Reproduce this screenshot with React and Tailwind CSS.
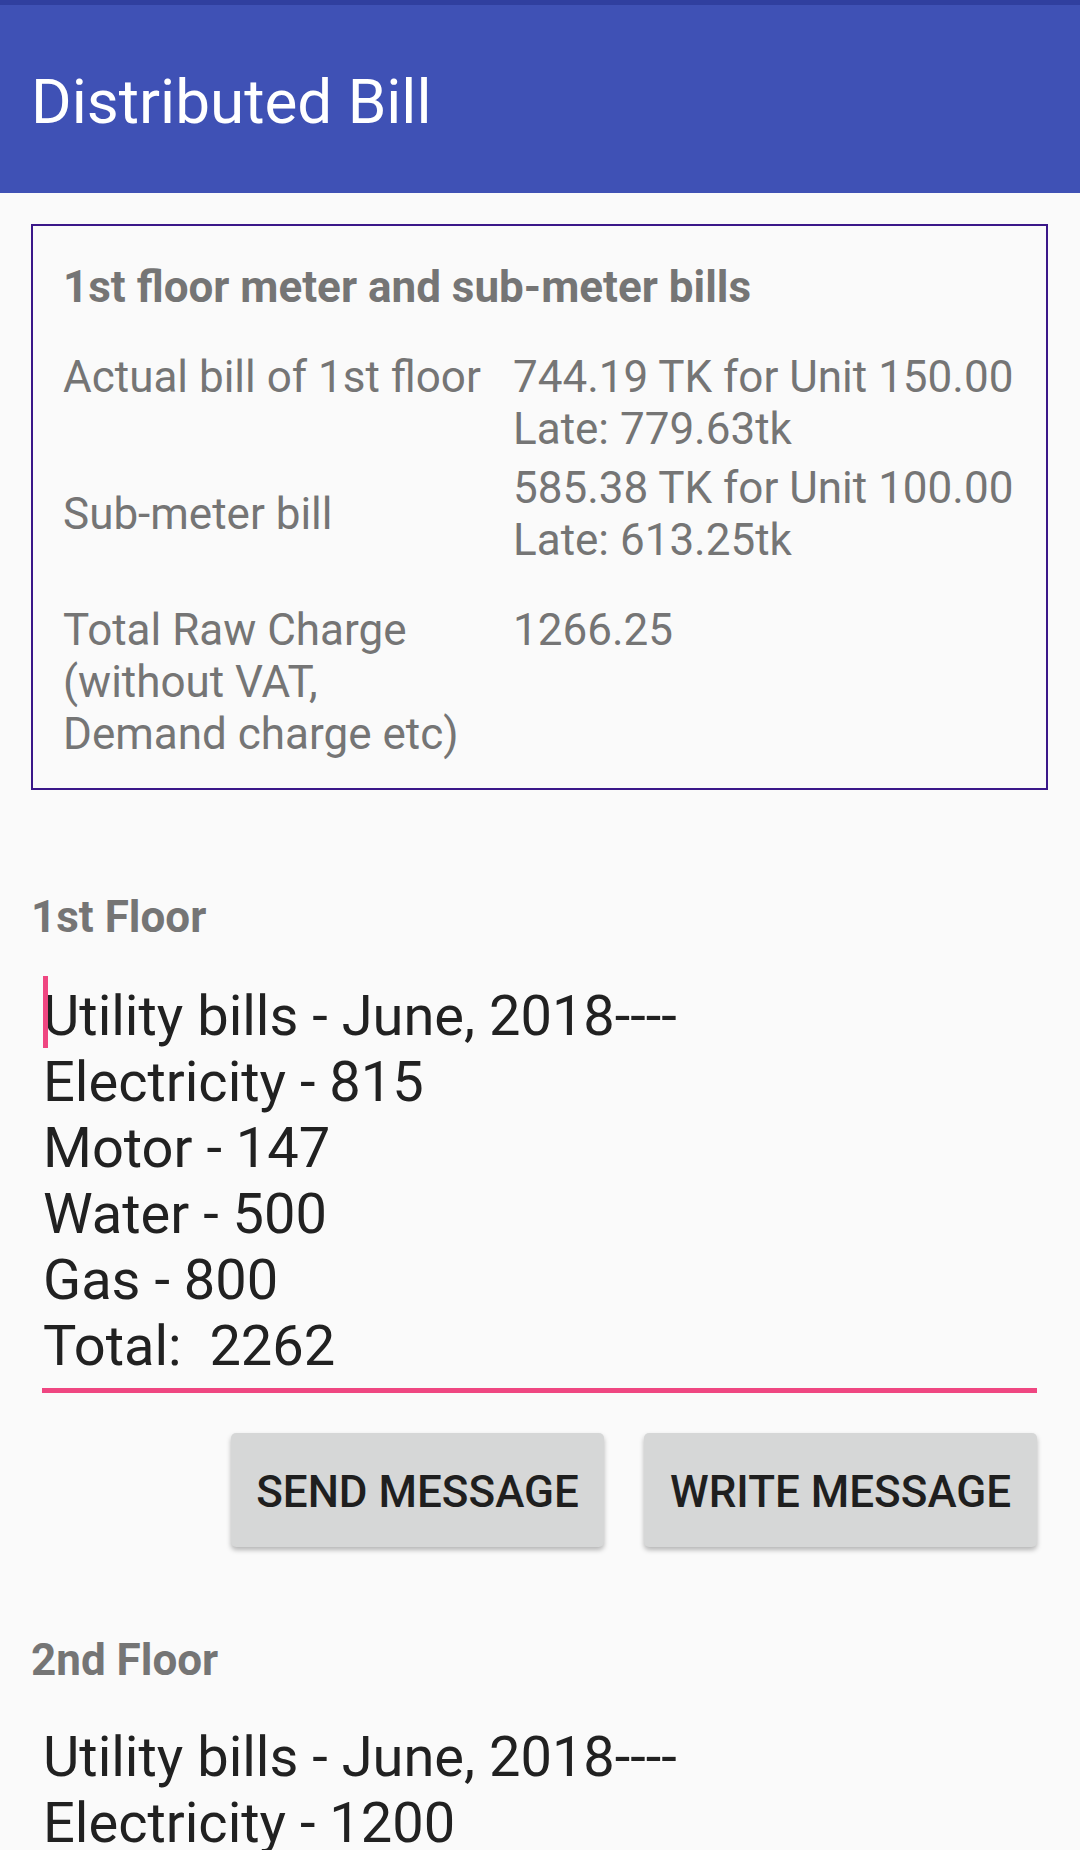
import React from "react";

// meter / sub-meter rows for the summary card
const meterRows = [
  {
    label: ["Actual bill of 1st floor"],
    value: ["744.19 TK for Unit 150.00", "Late: 779.63tk"],
    gap: "mt-[38px]",
    top: true,
  },
  {
    label: ["Sub-meter bill"],
    value: ["585.38 TK for Unit 100.00", "Late: 613.25tk"],
    gap: "mt-[7px]",
    top: false,
  },
  {
    label: ["Total Raw Charge", "(without VAT,", "Demand charge etc)"],
    value: ["1266.25"],
    gap: "mt-[38px]",
    top: true,
  },
];

const firstFloor = [
  "Utility bills - June, 2018----",
  "Electricity - 815",
  "Motor - 147",
  "Water - 500",
  "Gas - 800",
  "Total:  2262",
];

const secondFloor = [
  "Utility bills - June, 2018----",
  "Electricity - 1200",
  "Motor - 147",
  "Water - 500",
  "Gas - 800",
];

function MessageBox({ lines, focused }) {
  return (
    <div
      className={
        "relative mx-[11px] pl-px " +
        (focused ? "pb-[9px] border-b-[5px] border-[#ef4681]" : "")
      }>
      {focused && (
        <span className="absolute left-[1px] top-[-7px] w-[5px] h-[72px] bg-[#ef4681]"></span>
      )}
      {lines.map((line, i) => (
        <div
          key={i}
          className="text-[56px] leading-[66px] text-[#212121] whitespace-pre">
          {line}
        </div>
      ))}
    </div>
  );
}

export default function App() {
  return (
    <div className="h-[1850px] overflow-hidden bg-[#fafafa] font-['Roboto',sans-serif]">
      <div className="h-[5px] bg-[#303f9f]"></div>
      <div className="h-[188px] bg-[#3f51b5] pl-[31px] pt-[60px]">
        <h1 className="text-[62px] leading-[73px] text-white">
          Distributed Bill
        </h1>
      </div>

      <div className="pl-[31px] pr-[32px]">
        {/* summary card */}
        <div className="mt-[31px] border-2 border-[#3a1789] pt-[35px] pb-[28px] pl-[30px] pr-[20px]">
          <div className="text-[44px] leading-[52px] font-bold text-[#757575]">
            1st floor meter and sub-meter bills
          </div>
          {meterRows.map((row, i) => (
            <div
              key={i}
              className={
                "grid grid-cols-[450px_1fr] items-center text-[44px] leading-[52px] text-[#757575] " +
                row.gap
              }>
              <div className={row.top ? "self-start" : ""}>
                {row.label.map((l, j) => (
                  <div key={j}>{l}</div>
                ))}
              </div>
              <div className={row.top ? "self-start" : ""}>
                {row.value.map((v, j) => (
                  <div key={j} className="whitespace-nowrap">
                    {v}
                  </div>
                ))}
              </div>
            </div>
          ))}
        </div>

        {/* 1st floor */}
        <div className="mt-[101px] text-[44px] leading-[52px] font-bold text-[#757575]">
          1st Floor
        </div>
        <div className="mt-[40px]">
          <MessageBox lines={firstFloor} focused />
        </div>

        <div className="mt-[40px] mr-[11px] flex justify-end gap-[40px]">
          <button className="w-[373px] h-[114px] pt-[4px] rounded-[5px] bg-[#d6d7d7] shadow-[0_3px_5px_rgba(0,0,0,0.28)] text-[44px] font-medium text-[#1f1f1f]">
            SEND MESSAGE
          </button>
          <button className="w-[393px] h-[114px] pt-[4px] rounded-[5px] bg-[#d6d7d7] shadow-[0_3px_5px_rgba(0,0,0,0.28)] text-[44px] font-medium text-[#1f1f1f]">
            WRITE MESSAGE
          </button>
        </div>

        {/* 2nd floor */}
        <div className="mt-[87px] text-[44px] leading-[52px] font-bold text-[#757575]">
          2nd Floor
        </div>
        <div className="mt-[38px]">
          <MessageBox lines={secondFloor} />
        </div>
      </div>
    </div>
  );
}
